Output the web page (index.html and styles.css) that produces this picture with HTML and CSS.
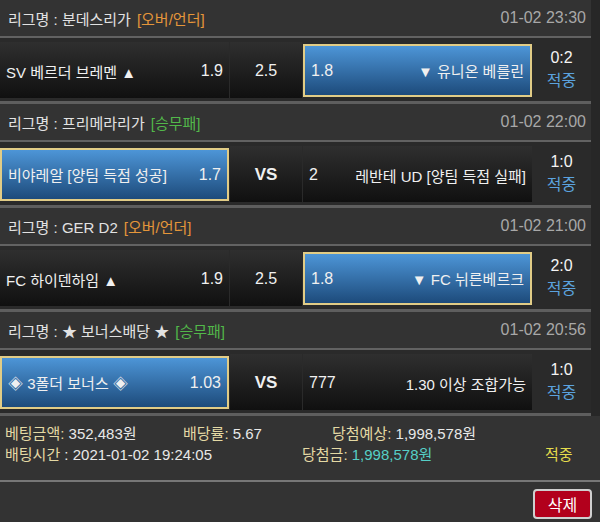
FILE: index.html
```html
<!DOCTYPE html>
<html lang="ko">
<head>
    <meta charset="UTF-8">
    <meta name="viewport" content="width=device-width, initial-scale=1.0">
    <title>배팅내역</title>
    <link rel="stylesheet" href="styles.css">
</head>
<body>
    <div class="bet-list">
        <div class="game">
            <div class="league">
                <span class="league-name">리그명 : 분데스리가</span>
                <span class="tag tag-ou">[오버/언더]</span>
                <span class="time">01-02 23:30</span>
            </div>
            <div class="match">
                <div class="pick home"><span class="team">SV 베르더 브레멘 ▲</span><span class="odd">1.9</span></div>
                <div class="draw">2.5</div>
                <div class="pick away selected"><span class="odd">1.8</span><span class="team">▼ 유니온 베를린</span></div>
                <div class="result"><span class="score">0:2</span><span class="hit">적중</span></div>
            </div>
        </div>

        <div class="game">
            <div class="league">
                <span class="league-name">리그명 : 프리메라리가</span>
                <span class="tag tag-wdl">[승무패]</span>
                <span class="time">01-02 22:00</span>
            </div>
            <div class="match">
                <div class="pick home selected"><span class="team">비야레알 [양팀 득점 성공]</span><span class="odd">1.7</span></div>
                <div class="draw vs">VS</div>
                <div class="pick away"><span class="odd">2</span><span class="team">레반테 UD [양팀 득점 실패]</span></div>
                <div class="result"><span class="score">1:0</span><span class="hit">적중</span></div>
            </div>
        </div>

        <div class="game">
            <div class="league">
                <span class="league-name">리그명 : GER D2</span>
                <span class="tag tag-ou">[오버/언더]</span>
                <span class="time">01-02 21:00</span>
            </div>
            <div class="match">
                <div class="pick home"><span class="team">FC 하이덴하임 ▲</span><span class="odd">1.9</span></div>
                <div class="draw">2.5</div>
                <div class="pick away selected"><span class="odd">1.8</span><span class="team">▼ FC 뉘른베르크</span></div>
                <div class="result"><span class="score">2:0</span><span class="hit">적중</span></div>
            </div>
        </div>

        <div class="game">
            <div class="league">
                <span class="league-name">리그명 : ★ 보너스배당 ★</span>
                <span class="tag tag-wdl">[승무패]</span>
                <span class="time">01-02 20:56</span>
            </div>
            <div class="match">
                <div class="pick home selected"><span class="team">◈ 3폴더 보너스 ◈</span><span class="odd">1.03</span></div>
                <div class="draw vs">VS</div>
                <div class="pick away"><span class="odd">777</span><span class="team">1.30 이상 조합가능</span></div>
                <div class="result"><span class="score">1:0</span><span class="hit">적중</span></div>
            </div>
        </div>
    </div>

    <div class="summary">
        <div class="summary-row">
            <span class="col-amount"><em>베팅금액:</em> 352,483원</span>
            <span class="col-rate"><em>배당률:</em> 5.67</span>
            <span><em>당첨예상:</em> 1,998,578원</span>
        </div>
        <div class="summary-row">
            <span class="col-time"><em>배팅시간</em> : 2021-01-02 19:24:05</span>
            <span class="col-win"><em>당첨금:</em> <b>1,998,578원</b></span>
            <span class="status">적중</span>
        </div>
    </div>

    <div class="actions">
        <button type="button" class="btn-delete">삭제</button>
    </div>
</body>
</html>
```

FILE: styles.css
```css
* {
    box-sizing: border-box;
}
body {
    margin: 0;
    background-color: #333;
    color: #e8e8e8;
    font-family: 'Liberation Sans', 'Noto Sans CJK KR', sans-serif;
    font-size: 15px;
}
.bet-list {
    background-color: #272727;
}
.game {
    width: 591px;
    background-color: #2a2a2a;
    border-bottom: 3px solid #5e5e5e;
}
.league {
    display: flex;
    align-items: center;
    height: 38px;
    padding: 0 5px 0 8px;
    background-color: #333;
    border-bottom: 2px solid #626262;
}
.league-name {
    color: #e2e2e2;
}
.tag {
    margin-left: 6px;
}
.tag-ou {
    color: #e5963a;
}
.tag-wdl {
    color: #52b84a;
}
.time {
    margin-left: auto;
    color: #a8a8a8;
    font-size: 16px;
}
.match {
    display: flex;
    height: 63px;
    padding-top: 4px;
}
.pick,
.draw {
    display: flex;
    align-items: center;
    height: 56px;
    padding-top: 2px;
    background: linear-gradient(#2f2f2f, #101010);
    color: #f0f0f0;
    font-size: 15px;
}
.pick {
    width: 229px;
    padding-left: 6px;
    padding-right: 6px;
    justify-content: space-between;
}
.odd {
    font-size: 16px;
}
.draw {
    width: 72px;
    margin: 0 1px;
    justify-content: center;
    font-size: 16px;
}
.draw.vs {
    font-weight: bold;
    font-size: 17px;
}
.pick.selected {
    height: 53px;
    margin-top: 2px;
    padding-top: 0;
    background: linear-gradient(#4d95d7, #1d4b7b);
    border: 2px solid #e1cc86;
}
.result {
    flex: 1;
    display: flex;
    flex-direction: column;
    align-items: center;
    justify-content: center;
    padding-bottom: 4px;
    font-size: 16px;
}
.score {
    color: #f4f4f4;
}
.hit {
    color: #5ba2de;
}
.summary {
    padding: 6px 5px 16px;
    font-size: 15px;
    border-bottom: 2px solid #777;
}
.summary-row {
    display: flex;
    height: 21px;
    align-items: center;
}
.summary em {
    font-style: normal;
    color: #e4d9a4;
}
.summary b {
    font-weight: normal;
    color: #56cfc6;
}
.col-amount {
    width: 178px;
}
.col-rate {
    width: 149px;
}
.col-time {
    width: 297px;
}
.col-win {
    width: 243px;
}
.status {
    color: #e4dc4c;
}
.actions {
    display: flex;
    justify-content: flex-end;
    padding: 7px 8px 0;
}
.btn-delete {
    width: 59px;
    height: 30px;
    background-color: #b2001c;
    color: #fff;
    border: 2px solid #cfcfcf;
    border-radius: 4px;
    font-family: 'Liberation Sans', 'Noto Sans CJK KR', sans-serif;
    font-size: 16px;
}
```
